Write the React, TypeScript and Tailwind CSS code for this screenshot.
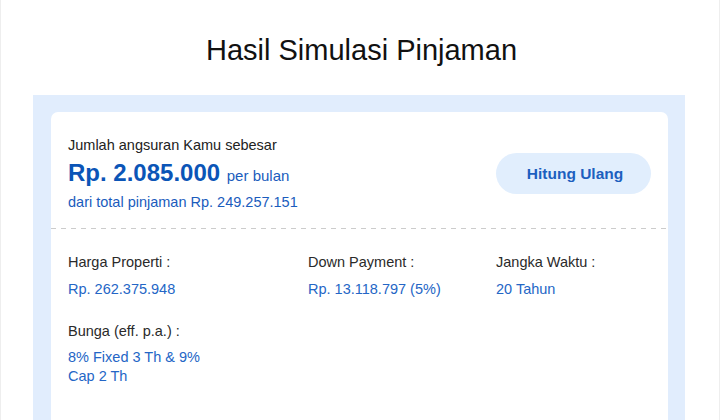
export default function App() {
  return (
    <div className="w-[720px] h-[420px] overflow-hidden bg-white border-x border-[#eeeeee] font-['Liberation_Sans',Arial,sans-serif]">
      <h1 className="pt-[32px] text-center text-[29px] leading-[36px] text-[#111111] pl-[3px]">
        Hasil Simulasi Pinjaman
      </h1>
      <div className="mt-[27px] ml-[32px] w-[652px] h-[400px] bg-[#e1edfd] px-[18px] pt-[17px]">
        <div className="w-[617px] h-[400px] bg-white rounded-[7px]">
          <div className="flex items-start justify-between pl-[17px] pr-[17px] pt-[23px] pb-[16px]">
            <div>
              <div className="text-[14.5px] leading-[20px] text-[#222222]">Jumlah angsuran Kamu sebesar</div>
              <div className="mt-[3px] leading-[30px] text-[24px] font-bold text-[#0b55b7]">
                Rp. 2.085.000{" "}
                <span className="text-[15px] font-normal text-[#1a5cbd]">per bulan</span>
              </div>
              <div className="mt-[1px] text-[14.5px] leading-[20px] text-[#1a5cbd]">
                dari total pinjaman Rp. 249.257.151
              </div>
            </div>
            <button className="mt-[18px] w-[155px] h-[41px] rounded-full bg-[#e1eefd] pl-[3px] text-[15.5px] font-bold text-[#1c5fbf]">
              Hitung Ulang
            </button>
          </div>
          <div className="h-px w-full bg-[linear-gradient(to_right,#cccccc_50%,transparent_50%)] bg-[length:10px_1px]" />
          <div className="grid grid-cols-[240px_188px_1fr] gap-y-[22px] pl-[17px] pt-[23px] text-[14.5px]">
            <div>
              <div className="leading-[20px] text-[#2a2a2a]">Harga Properti :</div>
              <div className="mt-[7px] leading-[20px] text-[#2466c6]">Rp. 262.375.948</div>
            </div>
            <div>
              <div className="leading-[20px] text-[#2a2a2a]">Down Payment :</div>
              <div className="mt-[7px] leading-[20px] text-[#2466c6]">Rp. 13.118.797 (5%)</div>
            </div>
            <div>
              <div className="leading-[20px] text-[#2a2a2a]">Jangka Waktu :</div>
              <div className="mt-[7px] leading-[20px] text-[#2466c6]">20 Tahun</div>
            </div>
            <div>
              <div className="leading-[20px] text-[#2a2a2a]">Bunga (eff. p.a.) :</div>
              <div className="mt-[7px] max-w-[150px] leading-[19px] text-[#2466c6]">8% Fixed 3 Th &amp; 9% Cap 2 Th</div>
            </div>
          </div>
        </div>
      </div>
    </div>
  );
}
